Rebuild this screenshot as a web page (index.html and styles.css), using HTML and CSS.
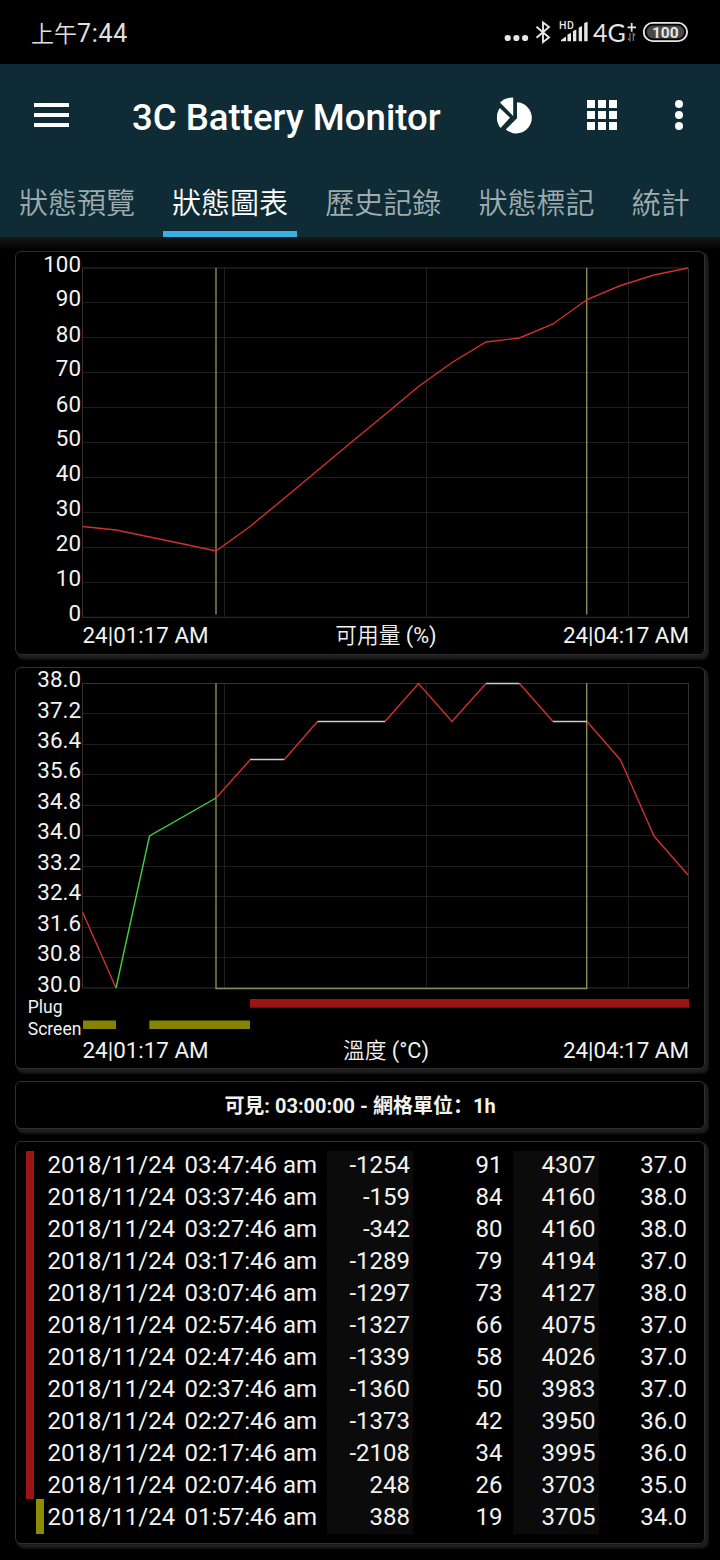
FILE: index.html
```html
<!DOCTYPE html>
<html lang="zh-Hant">
<head>
    <meta charset="UTF-8">
    <meta name="viewport" content="width=device-width, initial-scale=1.0">
    <title>3C Battery Monitor</title>
    <link rel="stylesheet" href="styles.css">
</head>
<body>

    <div class="status-bar">
        <div class="clock"><span class="ampm">上午</span>7:44</div>
        <svg class="status-icons" width="190" height="34" viewBox="500 16 190 34">
            <g fill="#e6e6e6">
                <circle cx="507.7" cy="38" r="3.1"/>
                <circle cx="516.4" cy="38" r="3.1"/>
                <circle cx="525.1" cy="38" r="3.1"/>
                <path d="M561 41.3V40l5-3.500V41.300zM567.500 41.300V34.500l3.500-1.500v8.300zM573 41.300V31l3.300-1.500v11.800zM578.700 41.300V27.500l3.300-1.500v15.300zM584.200 41.300V23l3.400-1.200v19.500z"/>
            </g>
            <path d="M536.500 26.700L549 37.500L543 42V22.500L549 27L536.500 37.800" fill="none" stroke="#e6e6e6" stroke-width="1.900"/>
            <text x="559" y="28.500" class="hd">HD</text>
            <text x="593" y="41.500" class="net">4G</text>
            <path d="M627.500 27.400H636M631.700 23v8.800" stroke="#e6e6e6" stroke-width="1.700"/>
            <path d="M630 33v7.500l-2-2M633.300 41v-7.500l2 2" fill="none" stroke="#777" stroke-width="1.300"/>
            <rect x="643.700" y="22.900" width="43.400" height="18.200" rx="9.100" fill="none" stroke="#e6e6e6" stroke-width="1.900"/>
            <rect x="646.700" y="25.500" width="37.400" height="13" rx="6.500" fill="#484848"/>
            <text x="665.300" y="37.700" class="level">100</text>
        </svg>
    </div>

    <div class="header">
        <div class="toolbar">
            <svg class="menu-icon" width="35" height="25" viewBox="0 0 35 25" fill="#fff">
                <path d="M0 0h35v4H0zM0 10h35v4H0zM0 20h35v4H0z"/>
            </svg>
            <h1 class="title">3C Battery Monitor</h1>
            <svg class="pie-icon" width="37" height="37" viewBox="496 97 37 37" fill="#fff">
                <path d="M514.200 97.500V116L501 102.500A18 18 0 0 1 514.200 97.500z"/>
                <path d="M500.800 108L511 117.700L501.500 128A17 17 0 0 1 500.800 108z"/>
                <path d="M518 102.200A15.600 15.600 0 1 1 506.800 129.400L518 118.300z"/>
            </svg>
            <svg class="apps-icon" width="30" height="30" viewBox="0 0 30 30" fill="#fff">
                <path d="M0 0h8v8H0zM11 0h8v8h-8zM22 0h8v8h-8zM0 11h8v8H0zM11 11h8v8h-8zM22 11h8v8h-8zM0 22h8v8H0zM11 22h8v8h-8zM22 22h8v8h-8z"/>
            </svg>
            <svg class="more-icon" width="8" height="30" viewBox="0 0 8 30" fill="#fff">
                <circle cx="4" cy="4" r="4"/>
                <circle cx="4" cy="15" r="4"/>
                <circle cx="4" cy="26" r="4"/>
            </svg>
        </div>
        <div class="tabs">
            <div class="tab">狀態預覽</div>
            <div class="tab active">狀態圖表</div>
            <div class="tab">歷史記錄</div>
            <div class="tab">狀態標記</div>
            <div class="tab">統計</div>
        </div>
    </div>

    <div class="content">

        <!-- Charge level -->
        <div class="card">
            <svg class="chart" width="688" height="402" viewBox="16 252 688 402">
                <path class="grid" d="M82.500 302.500H688M82.500 337.500H688M82.500 372.500H688M82.500 407.500H688M82.500 442.500H688M82.500 477.500H688M82.500 512.500H688M82.500 547.500H688M82.500 582.500H688M224.500 268V617M426.500 268V617M628.500 268V617"/>
                <rect class="frame" x="82.500" y="268" width="606" height="349.300"/>
                <path class="marker" d="M216 268V614.500M586.700 268V614.500"/>
                <polyline class="line red" points="82.500,526.500 116.200,530 149.800,537 183.500,544 216,551 250,526.500 284,498.500 317.500,470.500 351,442.500 385,414.500 418.500,386.500 452,362.500 486,342 519.500,338 553,324 587,299.500 620.500,285.500 654,275 688,268"/>
                <g class="axis">
                    <text x="81" y="272">100</text>
                    <text x="81" y="306">90</text>
                    <text x="81" y="341.500">80</text>
                    <text x="81" y="376">70</text>
                    <text x="81" y="411.500">60</text>
                    <text x="81" y="446">50</text>
                    <text x="81" y="481">40</text>
                    <text x="81" y="516">30</text>
                    <text x="81" y="551">20</text>
                    <text x="81" y="586">10</text>
                    <text x="81" y="620.500">0</text>
                </g>
                <g class="caption">
                    <text x="82.500" y="643">24|01:17 AM</text>
                    <text x="386" y="643" class="mid"><tspan class="cjk">可用量</tspan> (%)</text>
                    <text x="689" y="643" class="end">24|04:17 AM</text>
                </g>
            </svg>
        </div>

        <!-- Temperature -->
        <div class="card">
            <svg class="chart" width="688" height="400" viewBox="16 668 688 400">
                <path class="grid" d="M82.500 713.500H688M82.500 744.500H688M82.500 774.500H688M82.500 805.500H688M82.500 835.500H688M82.500 866.500H688M82.500 896.500H688M82.500 927.500H688M82.500 957.500H688M224.500 683V988M426.500 683V988M628.500 683V988"/>
                <rect class="frame" x="82.500" y="683.500" width="606" height="304.500"/>
                <path class="marker" d="M216 683V988.500H586.700V683"/>
                <path class="line red" d="M82.500 912L116 988M216 798L250 760M284 760L317.500 721.500M385 721.500L418.500 683.500L452 721.500L486 683.500M519.500 683.500L553 721.500M587 721.500L620.500 760L654 836L688 875"/>
                <path class="line green" d="M116 988L149.500 836L216 798"/>
                <path class="line flat" d="M250 759.500H284M317.500 721.500H385M486 683.500H519.500M553 721.500H587"/>
                <g class="axis">
                    <text x="81" y="687">38.0</text>
                    <text x="81" y="717.500">37.2</text>
                    <text x="81" y="747.500">36.4</text>
                    <text x="81" y="778">35.6</text>
                    <text x="81" y="808.500">34.8</text>
                    <text x="81" y="839">34.0</text>
                    <text x="81" y="869.500">33.2</text>
                    <text x="81" y="900">32.4</text>
                    <text x="81" y="930.500">31.6</text>
                    <text x="81" y="961">30.8</text>
                    <text x="81" y="991.500">30.0</text>
                </g>
                <g class="legend">
                    <text x="27.800" y="1013">Plug</text>
                    <text x="27.800" y="1035">Screen</text>
                </g>
                <rect x="250" y="999" width="439" height="8.700" fill="#9c1414"/>
                <path d="M83 1020.500h33v8.500H83zM149.300 1020.500H250v8.500H149.300z" fill="#848400"/>
                <g class="caption">
                    <text x="82.500" y="1057.500">24|01:17 AM</text>
                    <text x="386" y="1057.500" class="mid"><tspan class="cjk">溫度</tspan> (°C)</text>
                    <text x="689" y="1057.500" class="end">24|04:17 AM</text>
                </g>
            </svg>
        </div>

        <div class="card range" lang="zh-Hans">可見: 03:00:00 - 網格單位：1h</div>

        <div class="card history">
            <div class="bars">
                <div class="bar plug"></div>
                <div class="bar screen"></div>
            </div>
            <div class="rows">
                <div class="row"><span>2018/11/24</span><span>03:47:46 am</span><span>-1254</span><span>91</span><span>4307</span><span>37.0</span></div>
                <div class="row"><span>2018/11/24</span><span>03:37:46 am</span><span>-159</span><span>84</span><span>4160</span><span>38.0</span></div>
                <div class="row"><span>2018/11/24</span><span>03:27:46 am</span><span>-342</span><span>80</span><span>4160</span><span>38.0</span></div>
                <div class="row"><span>2018/11/24</span><span>03:17:46 am</span><span>-1289</span><span>79</span><span>4194</span><span>37.0</span></div>
                <div class="row"><span>2018/11/24</span><span>03:07:46 am</span><span>-1297</span><span>73</span><span>4127</span><span>38.0</span></div>
                <div class="row"><span>2018/11/24</span><span>02:57:46 am</span><span>-1327</span><span>66</span><span>4075</span><span>37.0</span></div>
                <div class="row"><span>2018/11/24</span><span>02:47:46 am</span><span>-1339</span><span>58</span><span>4026</span><span>37.0</span></div>
                <div class="row"><span>2018/11/24</span><span>02:37:46 am</span><span>-1360</span><span>50</span><span>3983</span><span>37.0</span></div>
                <div class="row"><span>2018/11/24</span><span>02:27:46 am</span><span>-1373</span><span>42</span><span>3950</span><span>36.0</span></div>
                <div class="row"><span>2018/11/24</span><span>02:17:46 am</span><span>-2108</span><span>34</span><span>3995</span><span>36.0</span></div>
                <div class="row"><span>2018/11/24</span><span>02:07:46 am</span><span>248</span><span>26</span><span>3703</span><span>35.0</span></div>
                <div class="row"><span>2018/11/24</span><span>01:57:46 am</span><span>388</span><span>19</span><span>3705</span><span>34.0</span></div>
            </div>
        </div>

    </div>

</body>
</html>
```
FILE: styles.css
```css
* {
    margin: 0;
    padding: 0;
    box-sizing: border-box;
}

body {
    width: 720px;
    height: 1560px;
    overflow: hidden;
    background-color: #000;
    color: #f2f2f2;
    font-family: Roboto, 'Noto Sans CJK TC', sans-serif;
}

svg {
    display: block;
    flex-shrink: 0;
    overflow: visible;
}

/* Status bar */

.status-bar {
    display: flex;
    justify-content: space-between;
    align-items: center;
    height: 64px;
    padding: 0 30px 0 31px;
}

.clock {
    margin-top: 4px;
    font-size: 25px;
    line-height: 30px;
    letter-spacing: 0.7px;
    color: #e0e0e0;
}

.ampm {
    font-size: 23px;
    font-weight: 350;
    letter-spacing: 0;
}

.status-icons {
    margin-top: 2px;
}

.status-icons text {
    fill: #e6e6e6;
}

.hd {
    font-size: 10.5px;
    font-weight: 500;
    letter-spacing: 0.6px;
}

.net {
    font-family: Lato, sans-serif;
    font-size: 25px;
}

.level {
    font-size: 15.5px;
    font-weight: bold;
    text-anchor: middle;
}

/* Header */

.header {
    height: 173px;
    background-color: #0f2c36;
}

.toolbar {
    display: flex;
    height: 106px;
    padding-left: 34px;
}

.menu-icon {
    margin-top: 38.5px;
}

.title {
    width: 363px;
    margin: 33px 0 0 63px;
    font-size: 36.6px;
    font-weight: 500;
    line-height: 42px;
    color: #fff;
    white-space: nowrap;
}

.pie-icon {
    margin-top: 33px;
}

.apps-icon {
    margin-top: 36px;
    margin-left: 55px;
}

.more-icon {
    margin-top: 36px;
    margin-left: 58px;
}

.tabs {
    display: flex;
    gap: 18.4px;
    height: 67px;
    padding-left: 9.5px;
}

.tab {
    height: 67px;
    padding: 0 9.4px;
    font-size: 29px;
    font-weight: 350;
    line-height: 69px;
    color: #9fabaf;
    white-space: nowrap;
}

.tab.active {
    color: #fff;
    border-bottom: 6px solid #3aaee0;
}

/* Cards */

.content {
    display: flex;
    flex-direction: column;
    gap: 12px;
    padding: 14px 15px 0;
    background: linear-gradient(#181818, #000 13px);
}

.card {
    border: 1px solid #303030;
    border-radius: 6px;
    background-color: #000;
    box-shadow: 2px 2px 0 1px #1d1d1d, 3px 4px 1px 1px #131313;
}

.chart text {
    fill: #f2f2f2;
}

.grid {
    fill: none;
    stroke: #1e1e1e;
}

.frame {
    fill: none;
    stroke: #333;
}

.marker {
    fill: none;
    stroke: #8c8c5a;
    stroke-width: 1.4;
}

.line {
    fill: none;
    stroke-width: 1.4;
}

.red {
    stroke: #d03030;
}

.green {
    stroke: #3fd03f;
}

.flat {
    stroke: #ccc;
}

.axis {
    font-size: 22.4px;
    text-anchor: end;
}

.caption {
    font-size: 22.4px;
}

.mid {
    font-size: 21.7px;
    text-anchor: middle;
}

.cjk {
    font-weight: 350;
}

.end {
    text-anchor: end;
}

.legend {
    font-size: 17.5px;
}

.range {
    height: 48px;
    font-family: Roboto, 'Noto Sans CJK SC', sans-serif;
    font-size: 20px;
    font-weight: bold;
    line-height: 49px;
    text-align: center;
}

/* History list */

.history {
    display: flex;
    height: 403px;
    padding: 9px 0 10px 10px;
}

.bars {
    width: 18px;
}

.bar {
    width: 7.5px;
}

.plug {
    height: 348px;
    background-color: #9c1414;
}

.screen {
    height: 35px;
    margin-left: 10px;
    background-color: #8c8c08;
}

.rows {
    height: 383px;
    margin-left: 3.5px;
    background: linear-gradient(90deg, transparent 279.5px, #0b0b0b 279.5px 365.5px, transparent 365.5px 465.5px, #0b0b0b 465.5px 551.5px, transparent 551.5px);
}

.row {
    display: grid;
    grid-template-columns: 137px 133.5px 92px 92.5px 93px 91.5px;
    height: 32px;
    font-size: 24px;
    line-height: 32px;
    white-space: nowrap;
}

.row:first-child {
    margin-top: -2px;
}

.row span:nth-child(n+3) {
    text-align: right;
}
```
